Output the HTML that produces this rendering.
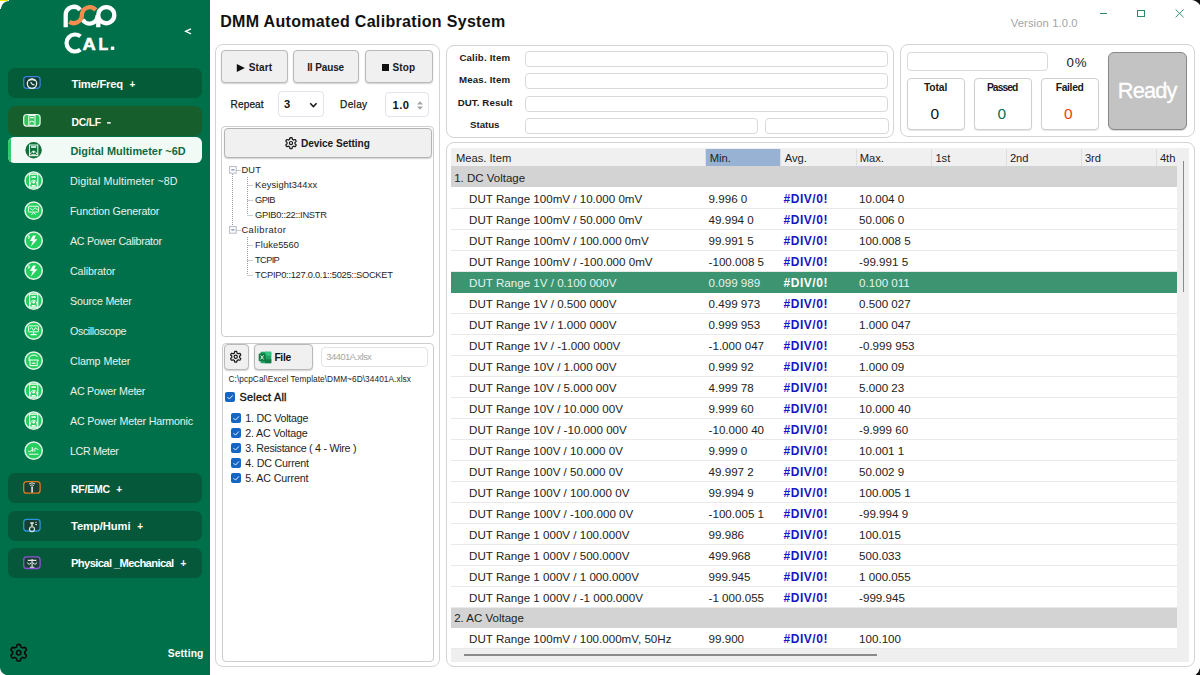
<!DOCTYPE html>
<html><head><meta charset="utf-8">
<style>
*{box-sizing:border-box;margin:0;padding:0}
html,body{width:1200px;height:675px;overflow:hidden;background:#fff;font-family:"Liberation Sans",sans-serif;color:#1e1e1e}
.a{position:absolute}
#side{position:absolute;left:0;top:0;width:210px;height:675px;background:#00704a}
.grp{position:absolute;left:8px;width:194px;height:30px;border-radius:7px;background:#05593a}
.panel{position:absolute;border:1px solid #d4d4d4;border-radius:8px;background:#fff}
.btn{position:absolute;border:1px solid #b9b9b9;border-radius:4px;background:#f0f0f0;box-shadow:0 1px 1.5px rgba(0,0,0,.18)}
.tb{position:absolute;border:1px solid #d9d9d9;border-radius:4px;background:#fff}
.tbx{position:absolute;border:1px solid #cfcfcf;border-radius:4px;background:#fff;box-shadow:0 1px 1px rgba(0,0,0,.10)}
.cb{position:absolute;width:10px;height:9.5px;border-radius:2px;background:#1565c4}
.grow{position:absolute;left:451px;width:726px;height:20.5px;background:#d3d3d3}
.row{position:absolute;left:451px;width:726px;height:21px;background:#fff;border-bottom:1px solid #e9e9e9}
.row.sel{background:#3c9470;border-bottom-color:#3c9470}
.hsep{position:absolute;top:148.5px;width:1px;height:17.5px;background:#dedede}
</style></head><body>
<div id="side">
  <div class="grp" style="top:68px;height:30.2px;background:#035b38"></div>
  <div class="grp" style="top:105.6px;height:30.4px;background:#165e2c"></div>
  <div class="a" style="left:8px;top:137.3px;width:194px;height:25.7px;border-radius:6px;background:#f2faf6;overflow:hidden">
    <div class="a" style="left:0;top:0;width:2.6px;height:26px;background:#34c96a"></div>
  </div>
  <div class="grp" style="top:473.1px;height:30.1px"></div>
  <div class="grp" style="top:510.5px;height:30.2px"></div>
  <div class="grp" style="top:547.6px;height:30.6px"></div>
</div>
<svg class="a" style="left:0;top:0" width="210" height="675" viewBox="0 0 210 675">
  <g fill="none" stroke-width="4.3">
    <path d="M65.7 27.2 L65.7 15.1 A8.2 8.2 0 0 1 80.2 9.8" stroke="#fff"/>
    <path d="M98.3 27.2 L98.3 15.1 A8.0 8.0 0 1 1 98.3 15.2" stroke="#fff"/>
    <path d="M82.6 19.6 A8.0 8.0 0 0 0 97.5 15.1" stroke="#fff"/>
    <path d="M69.3 21.8 A8.1 8.1 0 0 0 81.9 15.1 A7.9 7.9 0 0 1 95.8 10.0" stroke="#f58d4e"/>
  </g>
  <path d="M191 28.8 L185.6 31.3 L191 33.8" fill="none" stroke="#fff" stroke-width="1.3"/>
  <path d="M80.4 36.4 A8.5 8.5 0 1 0 80.4 49.6" fill="none" stroke="#fff" stroke-width="4.2"/>
  <g font-family="Liberation Sans" font-weight="bold" fill="#fff" stroke="#fff" stroke-width="0.6" font-size="16.4">
    <text x="82.6" y="49.7" textLength="13.2" lengthAdjust="spacingAndGlyphs">A</text>
    <text x="98.4" y="49.7" textLength="9.6" lengthAdjust="spacingAndGlyphs">L</text>
    <rect x="110.8" y="46.6" width="3.5" height="3.4" rx="0.8" stroke="none"/>
  </g>
  <!-- group icons -->
  <rect x="23.7" y="76.7" width="16.4" height="11.6" rx="3" fill="#0e3e30" stroke="#3c7fe0" stroke-width="1.3"/>
  <circle cx="32" cy="83.6" r="4.7" fill="none" stroke="#e6ece8" stroke-width="1.3"/>
  <path d="M30.6 82.2 L32.4 84.4 L34.6 85" fill="none" stroke="#e6ece8" stroke-width="1.2"/>
  <path d="M28.6 80.6 Q32 78.4 35.4 80.6" fill="none" stroke="#e6ece8" stroke-width="1.4"/>
  <rect x="23.7" y="114.5" width="16.4" height="11.6" rx="3" fill="#2cc55c" stroke="#eaf7ee" stroke-width="1.2"/>
  <g transform="translate(31.9,120.3) scale(0.72)" fill="none" stroke="#fff"><rect x="-4.3" y="-6.8" width="8.6" height="13.6" stroke-width="1.3"/><rect x="-2.4" y="-4.6" width="4.8" height="1.8" fill="#fff" stroke="none"/><path d="M-3 4 A3 3 0 0 1 3 4" stroke-width="1.3"/></g>
  <rect x="23.7" y="481.6" width="16.4" height="11.6" rx="3" fill="#173f33" stroke="#e0781e" stroke-width="1.3"/>
  <path d="M29 484 Q32 481.5 35 484 M30.2 485.6 Q32 484 33.8 485.6" fill="none" stroke="#dde8e2" stroke-width="1"/>
  <rect x="31.3" y="486.4" width="1.6" height="6.2" fill="#dde8e2"/>
  <rect x="23.7" y="519.4" width="16.4" height="11.6" rx="3" fill="#173f33" stroke="#2a94dc" stroke-width="1.3"/>
  <circle cx="32" cy="529.2" r="2.5" fill="none" stroke="#e2ebe6" stroke-width="1.1"/>
  <path d="M32 526.6 L32 523 M30.2 523 L33.8 523" fill="none" stroke="#e2ebe6" stroke-width="1.4"/>
  <path d="M35.2 524.6 L37 524.6 M35.4 522.4 L36.6 522.4" stroke="#e2ebe6" stroke-width="1"/>
  <rect x="23.7" y="556.9" width="16.4" height="11.6" rx="3" fill="#173f33" stroke="#8d54d6" stroke-width="1.3"/>
  <path d="M27.8 560.4 L36.4 560.4 M32.1 559 L32.1 567 M29.8 567.3 L34.4 567.3" fill="none" stroke="#e6ebe8" stroke-width="1.1"/>
  <path d="M27.6 562.5 A1.7 1.7 0 0 0 31 562.5 M33.2 562.5 A1.7 1.7 0 0 0 36.6 562.5" fill="none" stroke="#e6ebe8" stroke-width="1"/>
  <!-- selected icon -->
  <circle cx="33.6" cy="150.25" r="8.2" fill="#0e6f37"/>
  <g transform="translate(33.6,150.25)" fill="none" stroke="#e8f5ee">
<rect x="-4.1" y="-5.2" width="8.3" height="10.6" stroke-width="1.1"/>
<rect x="-2.6" y="-4.1" width="5.2" height="1.7" fill="#e8f5ee" stroke="none"/>
<path d="M-3.3 4.2 L-2.4 2.2 A2.8 2.8 0 0 1 2.4 2.2 L3.3 4.2" stroke-width="0.9"/>
<circle cx="0" cy="1.9" r="1.1" fill="#e8f5ee" stroke="none"/>
<rect x="-2.2" y="4.0" width="4.4" height="1.3" fill="#e8f5ee" stroke="none"/>
</g>
  <circle cx="33.65" cy="180.65" r="8.6" fill="#25cf5e" stroke="#e8f7ec" stroke-width="1.5"/><g transform="translate(33.65,180.65) scale(0.95)" fill="none" stroke="#fff">
<rect x="-4.3" y="-6.8" width="8.6" height="13.6" rx="0.8" stroke-width="1.2"/>
<rect x="-2.4" y="-4.6" width="4.8" height="1.6" fill="#fff" stroke="none"/>
<path d="M-3.2 4.2 A3.4 3.4 0 1 1 3.2 4.2" stroke-width="0.9"/>
<circle cx="0" cy="1.6" r="1.3" fill="#fff" stroke="none"/>
<rect x="-2" y="4.6" width="4" height="1.4" fill="#fff" stroke="none"/>
</g>
<circle cx="33.65" cy="210.65" r="8.6" fill="#25cf5e" stroke="#e8f7ec" stroke-width="1.5"/><g transform="translate(33.65,210.65)" fill="none" stroke="#fff" stroke-width="0.9">
<rect x="-5.2" y="-4.4" width="10" height="5.8" rx="0.5"/>
<path d="M-4 -2.5 L-1 -0.5 L1.5 -3 L4 -0.5" stroke-width="0.9"/>
<path d="M0 1.6 L-2 4.2 M0 1.6 L2 4.2" />
</g>
<circle cx="33.65" cy="240.65" r="8.6" fill="#25cf5e" stroke="#e8f7ec" stroke-width="1.5"/><g transform="translate(33.65,240.65)">
<path d="M-0.6 -5.2 L-3.8 0.4 L-0.7 0.4 L-2.9 6.0 L3.8 -1.3 L0.6 -1.3 L2.2 -5.2 Z" fill="#fff"/>
<path d="M-5 -5.5 L-5 -1.8 M-5 -5.5 Q-2.6 -3.6 -5 -1.8" fill="none" stroke="#e8f8ee" stroke-width="0.7"/>
</g>
<circle cx="33.65" cy="270.65" r="8.6" fill="#25cf5e" stroke="#e8f7ec" stroke-width="1.5"/><g transform="translate(33.65,270.65)">
<path d="M-0.6 -5.2 L-3.8 0.4 L-0.7 0.4 L-2.9 6.0 L3.8 -1.3 L0.6 -1.3 L2.2 -5.2 Z" fill="#fff"/>
<path d="M-5 -5.5 L-5 -1.8 M-5 -5.5 Q-2.6 -3.6 -5 -1.8" fill="none" stroke="#e8f8ee" stroke-width="0.7"/>
</g>
<circle cx="33.65" cy="300.65" r="8.6" fill="#25cf5e" stroke="#e8f7ec" stroke-width="1.5"/><g transform="translate(33.65,300.65) scale(0.95)" fill="none" stroke="#fff">
<rect x="-4.3" y="-6.8" width="8.6" height="13.6" rx="0.8" stroke-width="1.2"/>
<rect x="-2.4" y="-4.6" width="4.8" height="1.6" fill="#fff" stroke="none"/>
<path d="M-3.2 4.2 A3.4 3.4 0 1 1 3.2 4.2" stroke-width="0.9"/>
<circle cx="0" cy="1.6" r="1.3" fill="#fff" stroke="none"/>
<rect x="-2" y="4.6" width="4" height="1.4" fill="#fff" stroke="none"/>
</g>
<circle cx="33.65" cy="330.65" r="8.6" fill="#25cf5e" stroke="#e8f7ec" stroke-width="1.5"/><g transform="translate(33.65,330.65)" fill="none" stroke="#fff" stroke-width="0.9">
<rect x="-5.2" y="-4.8" width="10" height="6" rx="0.5"/>
<path d="M-4 -1.5 L-2 -3.2 L0 0 L2 -3 L4 -1.2"/>
<path d="M-3 4 L3 4 M0 1.2 L0 4" stroke-width="1.1"/>
</g>
<circle cx="33.65" cy="360.65" r="8.6" fill="#25cf5e" stroke="#e8f7ec" stroke-width="1.5"/><g transform="translate(33.65,360.65)" fill="none" stroke="#fff" stroke-width="1">
<path d="M-4.6 -0.8 A4.8 4 0 0 1 4 -4"/>
<path d="M-4.8 -0.6 L4.8 -0.6 L3.6 1 L3.6 5 L-3.6 5 L-3.6 1 Z" stroke-width="1"/>
<path d="M-1.8 2.6 L1.8 2.6" stroke-width="1.2"/>
</g>
<circle cx="33.65" cy="390.65" r="8.6" fill="#25cf5e" stroke="#e8f7ec" stroke-width="1.5"/><g transform="translate(33.65,390.65) scale(0.95)" fill="none" stroke="#fff">
<rect x="-4.3" y="-6.8" width="8.6" height="13.6" rx="0.8" stroke-width="1.2"/>
<rect x="-2.4" y="-4.6" width="4.8" height="1.6" fill="#fff" stroke="none"/>
<path d="M-3.2 4.2 A3.4 3.4 0 1 1 3.2 4.2" stroke-width="0.9"/>
<circle cx="0" cy="1.6" r="1.3" fill="#fff" stroke="none"/>
<rect x="-2" y="4.6" width="4" height="1.4" fill="#fff" stroke="none"/>
</g>
<circle cx="33.65" cy="420.65" r="8.6" fill="#25cf5e" stroke="#e8f7ec" stroke-width="1.5"/><g transform="translate(33.65,420.65) scale(0.95)" fill="none" stroke="#fff">
<rect x="-4.3" y="-6.8" width="8.6" height="13.6" rx="0.8" stroke-width="1.2"/>
<rect x="-2.4" y="-4.6" width="4.8" height="1.6" fill="#fff" stroke="none"/>
<path d="M-3.2 4.2 A3.4 3.4 0 1 1 3.2 4.2" stroke-width="0.9"/>
<circle cx="0" cy="1.6" r="1.3" fill="#fff" stroke="none"/>
<rect x="-2" y="4.6" width="4" height="1.4" fill="#fff" stroke="none"/>
</g>
<circle cx="33.65" cy="450.65" r="8.6" fill="#25cf5e" stroke="#e8f7ec" stroke-width="1.5"/><g transform="translate(33.65,450.65)" fill="none" stroke="#fff" stroke-width="0.9">
<path d="M-5.6 0.2 Q-4.4 1.8 -3 0.4 Q-2 -0.8 -1.4 0.8 L-1.4 -3.4 L-0.4 0.6 M1.2 0.8 L1.2 -2.4 Q2.6 -3.4 4.6 -0.6"/>
<path d="M-4.8 3.6 L4.8 3.6" stroke-width="1.1" stroke="#dff5e6"/>
</g>
  <!-- setting gear -->
  <path d="M24.80 652.70 L24.79 652.97 L24.78 653.23 L24.75 653.50 L24.80 653.78 L25.14 654.13 L25.65 654.56 L26.15 655.05 L26.41 655.51 L26.37 655.88 L26.22 656.21 L26.06 656.53 L25.89 656.85 L25.70 657.16 L25.50 657.46 L25.28 657.75 L24.99 657.97 L24.46 657.98 L23.79 657.79 L23.15 657.56 L22.68 657.45 L22.41 657.54 L22.20 657.70 L21.98 657.84 L21.75 657.98 L21.52 658.11 L21.28 658.23 L21.03 658.34 L20.82 658.52 L20.68 658.99 L20.56 659.65 L20.39 660.32 L20.12 660.78 L19.78 660.93 L19.42 660.97 L19.06 660.99 L18.70 661.00 L18.34 660.99 L17.98 660.97 L17.62 660.93 L17.28 660.78 L17.01 660.32 L16.84 659.65 L16.72 658.99 L16.58 658.52 L16.37 658.34 L16.12 658.23 L15.88 658.11 L15.65 657.98 L15.42 657.84 L15.20 657.70 L14.99 657.54 L14.72 657.45 L14.25 657.56 L13.61 657.79 L12.94 657.98 L12.41 657.97 L12.12 657.75 L11.90 657.46 L11.70 657.16 L11.51 656.85 L11.34 656.53 L11.18 656.21 L11.03 655.88 L10.99 655.51 L11.25 655.05 L11.75 654.56 L12.26 654.13 L12.60 653.78 L12.65 653.50 L12.62 653.23 L12.61 652.97 L12.60 652.70 L12.61 652.43 L12.62 652.17 L12.65 651.90 L12.60 651.62 L12.26 651.27 L11.75 650.84 L11.25 650.35 L10.99 649.89 L11.03 649.52 L11.18 649.19 L11.34 648.87 L11.51 648.55 L11.70 648.24 L11.90 647.94 L12.12 647.65 L12.41 647.43 L12.94 647.42 L13.61 647.61 L14.25 647.84 L14.72 647.95 L14.99 647.86 L15.20 647.70 L15.42 647.56 L15.65 647.42 L15.88 647.29 L16.12 647.17 L16.37 647.06 L16.58 646.88 L16.72 646.41 L16.84 645.75 L17.01 645.08 L17.28 644.62 L17.62 644.47 L17.98 644.43 L18.34 644.41 L18.70 644.40 L19.06 644.41 L19.42 644.43 L19.78 644.47 L20.12 644.62 L20.39 645.08 L20.56 645.75 L20.68 646.41 L20.82 646.88 L21.03 647.06 L21.28 647.17 L21.52 647.29 L21.75 647.42 L21.98 647.56 L22.20 647.70 L22.41 647.86 L22.68 647.95 L23.15 647.84 L23.79 647.61 L24.46 647.42 L24.99 647.43 L25.28 647.65 L25.50 647.94 L25.70 648.24 L25.89 648.55 L26.06 648.87 L26.22 649.19 L26.37 649.52 L26.41 649.89 L26.15 650.35 L25.65 650.84 L25.14 651.27 L24.80 651.62 L24.75 651.90 L24.78 652.17 L24.79 652.43Z" fill="none" stroke="#0a0a0a" stroke-width="1.6"/><circle cx="18.7" cy="652.7" r="2.2" fill="none" stroke="#0a0a0a" stroke-width="1.5"/>
</svg>

<!-- window controls -->
<div class="a" style="left:1099.5px;top:12.8px;width:7.5px;height:1.1px;background:#2e8a65"></div>
<div class="a" style="left:1137.3px;top:9.5px;width:8px;height:7.8px;border:1.1px solid #2e8a65"></div>
<svg class="a" style="left:1175px;top:9px" width="10" height="9" viewBox="0 0 10 9"><path d="M0.6 0.5L8.6 8.3M8.6 0.5L0.6 8.3" stroke="#3a9272" stroke-width="1"/></svg>

<!-- left control panel -->
<div class="panel" style="left:215.3px;top:44.3px;width:224.5px;height:622.4px"></div>
<div class="btn" style="left:221.3px;top:50.4px;width:66.4px;height:33px"></div>
<div class="btn" style="left:292.7px;top:50.4px;width:66.6px;height:33px"></div>
<div class="btn" style="left:364.7px;top:50.4px;width:68px;height:33px"></div>
<svg class="a" style="left:236px;top:63px" width="10" height="10" viewBox="0 0 10 10"><path d="M0.8 1 L8.9 5 L0.8 9 Z" fill="#111"/></svg>
<div class="a" style="left:381.6px;top:64.1px;width:7.4px;height:7.3px;background:#111"></div>
<div class="tb" style="left:278px;top:91.3px;width:46.4px;height:26px;border-color:#e0e5ec"></div>
<svg class="a" style="left:309px;top:102px" width="9" height="7" viewBox="0 0 9 7"><path d="M1.2 1.2L4.4 4.6L7.6 1.2" fill="none" stroke="#1a1a1a" stroke-width="1.5"/></svg>
<div class="tb" style="left:385.3px;top:92.3px;width:44px;height:24.4px;border-color:#e0e5ec"></div>
<svg class="a" style="left:416px;top:99.5px" width="8" height="11" viewBox="0 0 8 11"><path d="M1 4.5L4 1.2L7 4.5Z M1 6.5L4 9.8L7 6.5Z" fill="#a4a4a4"/></svg>

<div class="tb" style="left:221.4px;top:126.3px;width:212.8px;height:210.5px;border-color:#cdcdcd"></div>
<div class="btn" style="left:223.7px;top:128.3px;width:208px;height:29.4px;border-color:#b4b4b4"></div>
<svg class="a" style="left:0;top:0" width="450" height="400" viewBox="0 0 450 400"><path d="M295.00 143.10 L295.00 143.27 L294.98 143.45 L294.97 143.62 L294.98 143.80 L295.21 144.03 L295.59 144.33 L295.95 144.66 L296.13 144.97 L296.08 145.20 L295.98 145.42 L295.88 145.64 L295.76 145.85 L295.64 146.06 L295.51 146.25 L295.36 146.45 L295.18 146.61 L294.83 146.61 L294.36 146.46 L293.91 146.28 L293.60 146.20 L293.44 146.27 L293.29 146.38 L293.15 146.47 L293.00 146.56 L292.85 146.65 L292.69 146.73 L292.53 146.80 L292.38 146.90 L292.30 147.21 L292.23 147.69 L292.12 148.17 L291.95 148.48 L291.72 148.55 L291.48 148.58 L291.24 148.59 L291.00 148.60 L290.76 148.59 L290.52 148.58 L290.28 148.55 L290.05 148.48 L289.88 148.17 L289.77 147.69 L289.70 147.21 L289.62 146.90 L289.47 146.80 L289.31 146.73 L289.15 146.65 L289.00 146.56 L288.85 146.47 L288.71 146.38 L288.56 146.27 L288.40 146.20 L288.09 146.28 L287.64 146.46 L287.17 146.61 L286.82 146.61 L286.64 146.45 L286.49 146.25 L286.36 146.06 L286.24 145.85 L286.12 145.64 L286.02 145.42 L285.92 145.20 L285.87 144.97 L286.05 144.66 L286.41 144.33 L286.79 144.03 L287.02 143.80 L287.03 143.62 L287.02 143.45 L287.00 143.27 L287.00 143.10 L287.00 142.93 L287.02 142.75 L287.03 142.58 L287.02 142.40 L286.79 142.17 L286.41 141.87 L286.05 141.54 L285.87 141.23 L285.92 141.00 L286.02 140.78 L286.12 140.56 L286.24 140.35 L286.36 140.14 L286.49 139.95 L286.64 139.75 L286.82 139.59 L287.17 139.59 L287.64 139.74 L288.09 139.92 L288.40 140.00 L288.56 139.93 L288.71 139.82 L288.85 139.73 L289.00 139.64 L289.15 139.55 L289.31 139.47 L289.47 139.40 L289.62 139.30 L289.70 138.99 L289.77 138.51 L289.88 138.03 L290.05 137.72 L290.28 137.65 L290.52 137.62 L290.76 137.61 L291.00 137.60 L291.24 137.61 L291.48 137.62 L291.72 137.65 L291.95 137.72 L292.12 138.03 L292.23 138.51 L292.30 138.99 L292.38 139.30 L292.53 139.40 L292.69 139.47 L292.85 139.55 L293.00 139.64 L293.15 139.73 L293.29 139.82 L293.44 139.93 L293.60 140.00 L293.91 139.92 L294.36 139.74 L294.83 139.59 L295.18 139.59 L295.36 139.75 L295.51 139.95 L295.64 140.14 L295.76 140.35 L295.88 140.56 L295.98 140.78 L296.08 141.00 L296.13 141.23 L295.95 141.54 L295.59 141.87 L295.21 142.17 L294.98 142.40 L294.97 142.58 L294.98 142.75 L295.00 142.93Z" fill="none" stroke="#1a1a1a" stroke-width="1.25"/><circle cx="291" cy="143.1" r="1.6" fill="none" stroke="#1a1a1a" stroke-width="1.2"/></svg>
<svg class="a" style="left:225px;top:162px" width="40" height="120" viewBox="225 162 40 120">
  <rect x="229.6" y="166.6" width="6.6" height="6.6" fill="#fff" stroke="#b4b8c4" stroke-width="1"/>
  <path d="M231.3 169.9 L234.5 169.9" stroke="#5566a8" stroke-width="1"/>
  <rect x="229.6" y="226.6" width="6.6" height="6.6" fill="#fff" stroke="#b4b8c4" stroke-width="1"/>
  <path d="M231.3 229.9 L234.5 229.9" stroke="#5566a8" stroke-width="1"/>
  <g stroke="#9a9a9a" stroke-width="1" stroke-dasharray="1 1" fill="none">
    <path d="M232.5 174 L232.5 226"/>
    <path d="M236.5 170.5 L241 170.5 M236.5 230.5 L241 230.5"/>
    <path d="M247.5 177 L247.5 215 M247.5 185.5 L253.5 185.5 M247.5 200.5 L253.5 200.5 M247.5 215.5 L253.5 215.5"/>
    <path d="M247.5 237 L247.5 275 M247.5 245.5 L253.5 245.5 M247.5 260.5 L253.5 260.5 M247.5 275.5 L253.5 275.5"/>
  </g>
</svg>

<div class="tb" style="left:221.7px;top:342.5px;width:212.5px;height:319px;border-color:#cdcdcd"></div>
<div class="btn" style="left:224.2px;top:344.3px;width:24.6px;height:25.3px"></div>

<div class="btn" style="left:253.7px;top:344.3px;width:59.6px;height:25.3px"></div>
<svg class="a" style="left:258px;top:351px" width="14" height="13" viewBox="0 0 14 13">
  <rect x="2.5" y="0.7" width="10.8" height="11.5" rx="1" fill="#21a366"/>
  <rect x="7" y="0.7" width="6.3" height="4" fill="#33c481"/>
  <rect x="7" y="8.3" width="6.3" height="3.9" fill="#107c41"/>
  <rect x="0.7" y="2.6" width="7" height="7.6" rx="0.8" fill="#107c41"/>
  <path d="M2.6 4.4 L5.6 8.4 M5.6 4.4 L2.6 8.4" stroke="#fff" stroke-width="0.9"/>
</svg>
<div class="tb" style="left:320.5px;top:346.5px;width:107.1px;height:20.8px;border-color:#e3e3e3"></div>
<svg class="a" style="left:0;top:0" width="450" height="400" viewBox="0 0 450 400"><path d="M239.60 356.80 L239.60 356.97 L239.59 357.14 L239.57 357.31 L239.58 357.48 L239.81 357.71 L240.19 358.00 L240.55 358.33 L240.73 358.63 L240.69 358.87 L240.59 359.08 L240.49 359.29 L240.38 359.50 L240.25 359.70 L240.12 359.90 L239.98 360.09 L239.80 360.24 L239.45 360.24 L238.99 360.09 L238.54 359.90 L238.23 359.82 L238.07 359.89 L237.94 359.99 L237.80 360.09 L237.65 360.18 L237.50 360.26 L237.35 360.33 L237.19 360.40 L237.05 360.50 L236.97 360.82 L236.90 361.29 L236.80 361.77 L236.63 362.08 L236.40 362.15 L236.17 362.18 L235.94 362.19 L235.70 362.20 L235.46 362.19 L235.23 362.18 L235.00 362.15 L234.77 362.08 L234.60 361.77 L234.50 361.29 L234.43 360.82 L234.35 360.50 L234.21 360.40 L234.05 360.33 L233.90 360.26 L233.75 360.18 L233.60 360.09 L233.46 359.99 L233.33 359.89 L233.17 359.82 L232.86 359.90 L232.41 360.09 L231.95 360.24 L231.60 360.24 L231.42 360.09 L231.28 359.90 L231.15 359.70 L231.02 359.50 L230.91 359.29 L230.81 359.08 L230.71 358.87 L230.67 358.63 L230.85 358.33 L231.21 358.00 L231.59 357.71 L231.82 357.48 L231.83 357.31 L231.81 357.14 L231.80 356.97 L231.80 356.80 L231.80 356.63 L231.81 356.46 L231.83 356.29 L231.82 356.12 L231.59 355.89 L231.21 355.60 L230.85 355.27 L230.67 354.97 L230.71 354.73 L230.81 354.52 L230.91 354.31 L231.02 354.10 L231.15 353.90 L231.28 353.70 L231.42 353.51 L231.60 353.36 L231.95 353.36 L232.41 353.51 L232.86 353.70 L233.17 353.78 L233.33 353.71 L233.46 353.61 L233.60 353.51 L233.75 353.42 L233.90 353.34 L234.05 353.27 L234.21 353.20 L234.35 353.10 L234.43 352.78 L234.50 352.31 L234.60 351.83 L234.77 351.52 L235.00 351.45 L235.23 351.42 L235.46 351.41 L235.70 351.40 L235.94 351.41 L236.17 351.42 L236.40 351.45 L236.63 351.52 L236.80 351.83 L236.90 352.31 L236.97 352.78 L237.05 353.10 L237.19 353.20 L237.35 353.27 L237.50 353.34 L237.65 353.42 L237.80 353.51 L237.94 353.61 L238.07 353.71 L238.23 353.78 L238.54 353.70 L238.99 353.51 L239.45 353.36 L239.80 353.36 L239.98 353.51 L240.12 353.70 L240.25 353.90 L240.38 354.10 L240.49 354.31 L240.59 354.52 L240.69 354.73 L240.73 354.97 L240.55 355.27 L240.19 355.60 L239.81 355.89 L239.58 356.12 L239.57 356.29 L239.59 356.46 L239.60 356.63Z" fill="none" stroke="#1a1a1a" stroke-width="1.25"/><circle cx="235.7" cy="356.8" r="1.6" fill="none" stroke="#1a1a1a" stroke-width="1.2"/></svg>
<div class="cb" style="left:225px;top:392.3px"></div>
<div class="cb" style="left:231.1px;top:413.4px"></div><div class="cb" style="left:231.1px;top:428.4px"></div><div class="cb" style="left:231.1px;top:443.4px"></div><div class="cb" style="left:231.1px;top:458.4px"></div><div class="cb" style="left:231.1px;top:473.4px"></div>
<svg class="a" style="left:0;top:0" width="260" height="500" viewBox="0 0 260 500">
  <path d="M227.4 397 L229.4 399 L232.8 395.3" fill="none" stroke="#fff" stroke-width="0.9"/>
  <path d="M233.5 418.1 L235.5 420.1 L238.9 416.4" fill="none" stroke="#fff" stroke-width="0.9"/><path d="M233.5 433.1 L235.5 435.1 L238.9 431.4" fill="none" stroke="#fff" stroke-width="0.9"/><path d="M233.5 448.1 L235.5 450.1 L238.9 446.4" fill="none" stroke="#fff" stroke-width="0.9"/><path d="M233.5 463.1 L235.5 465.1 L238.9 461.4" fill="none" stroke="#fff" stroke-width="0.9"/><path d="M233.5 478.1 L235.5 480.1 L238.9 476.4" fill="none" stroke="#fff" stroke-width="0.9"/>
</svg>

<!-- info panel -->
<div class="panel" style="left:445.6px;top:44.6px;width:448.8px;height:93.1px"></div>
<div class="tb" style="left:525.3px;top:50.5px;width:363.2px;height:16.2px"></div>
<div class="tb" style="left:525.3px;top:73.2px;width:363.2px;height:16.2px"></div>
<div class="tb" style="left:525.3px;top:95.5px;width:363.2px;height:16.2px"></div>
<div class="tb" style="left:525.3px;top:117.8px;width:232.9px;height:16.2px"></div>
<div class="tb" style="left:765px;top:117.8px;width:123.5px;height:16.2px"></div>

<!-- status panel -->
<div class="panel" style="left:899.6px;top:44.4px;width:295px;height:92.7px"></div>
<div class="tb" style="left:906.6px;top:52.3px;width:141.1px;height:18.7px"></div>
<div class="tbx" style="left:906.6px;top:77.5px;width:58.8px;height:52.8px"></div>
<div class="tbx" style="left:973.6px;top:77.5px;width:58.6px;height:52.8px"></div>
<div class="tbx" style="left:1040.7px;top:77.5px;width:58.5px;height:52.8px"></div>
<div class="a" style="left:1107.7px;top:51.8px;width:79.2px;height:78.7px;border-radius:6px;background:#c3c3c3;border:1px solid #888;box-shadow:0 1px 1px rgba(0,0,0,.15)"></div>

<!-- table panel -->
<div class="panel" style="left:445.6px;top:142.3px;width:749px;height:524.9px"></div>
<div class="a" style="left:451px;top:148px;width:738px;height:514px;background:#efefef"></div>
<div class="a" style="left:451px;top:148px;width:726px;height:18px;background:#f0f0f0"></div>
<div class="a" style="left:705.8px;top:148.7px;width:74.2px;height:17.1px;background:#97b2d2"></div>
<div class="hsep" style="left:780px"></div>
<div class="hsep" style="left:855.5px"></div>
<div class="hsep" style="left:930.5px"></div>
<div class="hsep" style="left:1005.5px"></div>
<div class="hsep" style="left:1080.5px"></div>
<div class="hsep" style="left:1155.5px"></div>
<div class="hsep" style="left:705px"></div>
<div class="grow" style="top:166px;height:21.5px"></div>
<div class="row" style="top:187px;height:21.5px"></div>
<div class="row" style="top:208.5px"></div>
<div class="row" style="top:229.5px"></div>
<div class="row" style="top:250.5px"></div>
<div class="row sel" style="top:271.5px"></div>
<div class="row" style="top:292.5px"></div>
<div class="row" style="top:313.5px"></div>
<div class="row" style="top:334.5px"></div>
<div class="row" style="top:355.5px"></div>
<div class="row" style="top:376.5px"></div>
<div class="row" style="top:397.5px"></div>
<div class="row" style="top:418.5px"></div>
<div class="row" style="top:439.5px"></div>
<div class="row" style="top:460.5px"></div>
<div class="row" style="top:481.5px"></div>
<div class="row" style="top:502.5px"></div>
<div class="row" style="top:523.5px"></div>
<div class="row" style="top:544.5px"></div>
<div class="row" style="top:565.5px"></div>
<div class="row" style="top:586.5px"></div>
<div class="grow" style="top:607.5px"></div>
<div class="row" style="top:628.0px"></div>
<div class="a" style="left:1182.6px;top:160.7px;width:1.5px;height:131px;background:#8a8a8a"></div>
<div class="a" style="left:463.8px;top:654.3px;width:413.2px;height:1.5px;background:#8a8a8a"></div>

<svg class="a" style="left:0;top:0;pointer-events:none" width="1200" height="675" viewBox="0 0 1200 675" font-family="Liberation Sans"><text x="71.60" y="88.30" font-size="11.2" font-weight="bold" fill="#fff" textLength="51.40" lengthAdjust="spacing">Time/Freq</text>
<text x="129.60" y="88.30" font-size="10" font-weight="bold" fill="#fff">+</text>
<text x="71.40" y="125.60" font-size="10.4" font-weight="bold" fill="#fff" textLength="29.80" lengthAdjust="spacing">DC/LF</text>
<rect x="107.1" y="122.1" width="3.6" height="1.5" fill="#fff"/>
<text x="70.40" y="154.80" font-size="10.9" font-weight="bold" fill="#0b6a43" textLength="115.20" lengthAdjust="spacing">Digital Multimeter ~6D</text>
<text x="70.00" y="185.00" font-size="10.7" fill="#e9f2ec" textLength="107.50" lengthAdjust="spacing">Digital Multimeter ~8D</text>
<text x="70.00" y="215.00" font-size="10.7" fill="#e9f2ec" textLength="89.40" lengthAdjust="spacing">Function Generator</text>
<text x="70.00" y="245.00" font-size="10.7" fill="#e9f2ec" textLength="92.00" lengthAdjust="spacing">AC Power Calibrator</text>
<text x="70.00" y="275.00" font-size="10.7" fill="#e9f2ec" textLength="45.30" lengthAdjust="spacing">Calibrator</text>
<text x="70.00" y="305.00" font-size="10.7" fill="#e9f2ec" textLength="61.90" lengthAdjust="spacing">Source Meter</text>
<text x="70.00" y="335.00" font-size="10.7" fill="#e9f2ec" textLength="56.40" lengthAdjust="spacing">Oscilloscope</text>
<text x="70.00" y="365.00" font-size="10.7" fill="#e9f2ec" textLength="60.40" lengthAdjust="spacing">Clamp Meter</text>
<text x="70.00" y="395.00" font-size="10.7" fill="#e9f2ec" textLength="75.40" lengthAdjust="spacing">AC Power Meter</text>
<text x="70.00" y="425.00" font-size="10.7" fill="#e9f2ec" textLength="123.10" lengthAdjust="spacing">AC Power Meter Harmonic</text>
<text x="70.00" y="455.00" font-size="10.7" fill="#e9f2ec" textLength="48.80" lengthAdjust="spacing">LCR Meter</text>
<text x="71.00" y="492.70" font-size="10.5" font-weight="bold" fill="#fff" textLength="39.10" lengthAdjust="spacing">RF/EMC</text>
<text x="116.20" y="492.70" font-size="10" font-weight="bold" fill="#fff">+</text>
<text x="71.00" y="530.10" font-size="11.2" font-weight="bold" fill="#fff" textLength="59.60" lengthAdjust="spacing">Temp/Humi</text>
<text x="137.20" y="530.10" font-size="10" font-weight="bold" fill="#fff">+</text>
<text x="71.00" y="567.40" font-size="11.2" font-weight="bold" fill="#fff" textLength="103.20" lengthAdjust="spacing">Physical _Mechanical</text>
<text x="180.40" y="567.40" font-size="10" font-weight="bold" fill="#fff">+</text>
<text x="167.70" y="656.80" font-size="10.3" font-weight="bold" fill="#fff" textLength="35.70" lengthAdjust="spacing">Setting</text>
<text x="220.20" y="26.90" font-size="16" font-weight="bold" fill="#111" textLength="285.00" lengthAdjust="spacing">DMM Automated Calibration System</text>
<text x="1010.70" y="27.00" font-size="11.2" fill="#a4a4a4" textLength="66.90" lengthAdjust="spacing">Version 1.0.0</text>
<text x="248.70" y="71.40" font-size="10" font-weight="bold" fill="#1a1a1a" textLength="23.30" lengthAdjust="spacing">Start</text>
<text x="307.15" y="71.30" font-size="10" font-weight="bold" fill="#1a1a1a" textLength="37.00" lengthAdjust="spacing">II Pause</text>
<text x="392.40" y="71.40" font-size="10" font-weight="bold" fill="#1a1a1a" textLength="22.70" lengthAdjust="spacing">Stop</text>
<text x="230.60" y="108.00" font-size="10.1" fill="#1a1a1a" textLength="33.00" lengthAdjust="spacing" stroke="#1a1a1a" stroke-width="0.25">Repeat</text>
<text x="284.10" y="108.00" font-size="11.2" font-weight="bold" fill="#111">3</text>
<text x="340.10" y="108.00" font-size="10.1" fill="#1a1a1a" textLength="27.00" lengthAdjust="spacing" stroke="#1a1a1a" stroke-width="0.25">Delay</text>
<text x="392.40" y="108.60" font-size="11.2" font-weight="bold" fill="#111" textLength="16.70" lengthAdjust="spacing">1.0</text>
<text x="300.90" y="147.00" font-size="10.1" font-weight="bold" fill="#1a1a1a" textLength="69.00" lengthAdjust="spacing">Device Setting</text>
<text x="241.40" y="173.30" font-size="9.3" fill="#1e1e1e" textLength="19.60" lengthAdjust="spacing">DUT</text>
<text x="255.10" y="188.30" font-size="9.3" fill="#1e1e1e" textLength="62.00" lengthAdjust="spacing">Keysight344xx</text>
<text x="255.10" y="203.30" font-size="9.3" fill="#1e1e1e" textLength="20.30" lengthAdjust="spacing">GPIB</text>
<text x="255.10" y="218.30" font-size="9.3" fill="#1e1e1e" textLength="71.80" lengthAdjust="spacing">GPIB0::22::INSTR</text>
<text x="241.40" y="233.30" font-size="9.3" fill="#1e1e1e" textLength="44.50" lengthAdjust="spacing">Calibrator</text>
<text x="255.10" y="248.30" font-size="9.3" fill="#1e1e1e" textLength="43.90" lengthAdjust="spacing">Fluke5560</text>
<text x="255.10" y="263.30" font-size="9.3" fill="#1e1e1e" textLength="24.70" lengthAdjust="spacing">TCPIP</text>
<text x="255.10" y="278.30" font-size="9.3" fill="#1e1e1e" textLength="137.80" lengthAdjust="spacing">TCPIP0::127.0.0.1::5025::SOCKET</text>
<text x="274.40" y="361.30" font-size="10.3" font-weight="bold" fill="#111" textLength="16.80" lengthAdjust="spacing">File</text>
<text x="326.30" y="360.40" font-size="9.6" fill="#a8a8a8" textLength="45.50" lengthAdjust="spacing">34401A.xlsx</text>
<text x="228.50" y="382.40" font-size="8.3" fill="#1e1e1e" textLength="182.40" lengthAdjust="spacing">C:\pcpCal\Excel Template\DMM~6D\34401A.xlsx</text>
<text x="239.60" y="400.90" font-size="10.8" fill="#111" textLength="46.90" lengthAdjust="spacing" stroke="#111" stroke-width="0.35">Select All</text>
<text x="245.30" y="421.90" font-size="10.7" fill="#1e1e1e" textLength="63.10" lengthAdjust="spacing">1. DC Voltage</text>
<text x="245.30" y="436.90" font-size="10.7" fill="#1e1e1e" textLength="62.30" lengthAdjust="spacing">2. AC Voltage</text>
<text x="245.30" y="451.90" font-size="10.7" fill="#1e1e1e" textLength="111.20" lengthAdjust="spacing">3. Resistance ( 4 - Wire )</text>
<text x="245.30" y="466.90" font-size="10.7" fill="#1e1e1e" textLength="63.80" lengthAdjust="spacing">4. DC Current</text>
<text x="245.30" y="481.90" font-size="10.7" fill="#1e1e1e" textLength="63.30" lengthAdjust="spacing">5. AC Current</text>
<text x="459.40" y="61.00" font-size="9.7" font-weight="bold" fill="#1a1a1a" textLength="50.70" lengthAdjust="spacing">Calib. Item</text>
<text x="459.00" y="83.30" font-size="9.7" font-weight="bold" fill="#1a1a1a" textLength="51.10" lengthAdjust="spacing">Meas. Item</text>
<text x="457.70" y="105.70" font-size="9.7" font-weight="bold" fill="#1a1a1a" textLength="54.70" lengthAdjust="spacing">DUT. Result</text>
<text x="470.10" y="127.90" font-size="9.7" font-weight="bold" fill="#1a1a1a" textLength="29.30" lengthAdjust="spacing">Status</text>
<text x="1066.60" y="66.90" font-size="13.3" fill="#222" textLength="20.00" lengthAdjust="spacing">0%</text>
<text x="923.90" y="91.00" font-size="10.3" font-weight="bold" fill="#1a1a1a" textLength="23.40" lengthAdjust="spacing">Total</text>
<text x="986.90" y="91.00" font-size="10.3" font-weight="bold" fill="#1a1a1a" textLength="31.40" lengthAdjust="spacing">Passed</text>
<text x="1055.80" y="91.00" font-size="10.3" font-weight="bold" fill="#1a1a1a" textLength="28.00" lengthAdjust="spacing">Failed</text>
<text x="930.40" y="118.90" font-size="15.5" fill="#111">0</text>
<text x="997.40" y="118.90" font-size="15.5" fill="#0b6e52">0</text>
<text x="1064.00" y="118.90" font-size="15.5" fill="#f23c0c">0</text>
<text x="1117.70" y="98.20" font-size="21.8" fill="#fff" textLength="59.80" lengthAdjust="spacing" stroke="#fff" stroke-width="0.3">Ready</text>
<text x="455.90" y="162.10" font-size="11.2" fill="#222">Meas. Item</text>
<text x="709.70" y="162.10" font-size="11.2" fill="#222">Min.</text>
<text x="784.70" y="162.10" font-size="11.2" fill="#222">Avg.</text>
<text x="859.70" y="162.10" font-size="11.2" fill="#222">Max.</text>
<text x="935.40" y="162.10" font-size="11.2" fill="#222">1st</text>
<text x="1009.90" y="162.10" font-size="11.2" fill="#222">2nd</text>
<text x="1084.90" y="162.10" font-size="11.2" fill="#222">3rd</text>
<text x="1159.90" y="162.10" font-size="11.2" fill="#222">4th</text>
<text x="454.20" y="181.60" font-size="11.5" fill="#222">1. DC Voltage</text>
<text x="469.10" y="202.50" font-size="11.6" fill="#222">DUT Range 100mV / 10.000 0mV</text>
<text x="708.60" y="202.50" font-size="11.6" fill="#222">9.996 0</text>
<text x="783.60" y="202.50" font-size="12" font-weight="bold" fill="#1616c4" textLength="43.80" lengthAdjust="spacing">#DIV/0!</text>
<text x="859.10" y="202.50" font-size="11.6" fill="#222">10.004 0</text>
<text x="469.10" y="223.50" font-size="11.6" fill="#222">DUT Range 100mV / 50.000 0mV</text>
<text x="708.60" y="223.50" font-size="11.6" fill="#222">49.994 0</text>
<text x="783.60" y="223.50" font-size="12" font-weight="bold" fill="#1616c4" textLength="43.80" lengthAdjust="spacing">#DIV/0!</text>
<text x="859.10" y="223.50" font-size="11.6" fill="#222">50.006 0</text>
<text x="469.10" y="244.50" font-size="11.6" fill="#222">DUT Range 100mV / 100.000 0mV</text>
<text x="708.60" y="244.50" font-size="11.6" fill="#222">99.991 5</text>
<text x="783.60" y="244.50" font-size="12" font-weight="bold" fill="#1616c4" textLength="43.80" lengthAdjust="spacing">#DIV/0!</text>
<text x="859.10" y="244.50" font-size="11.6" fill="#222">100.008 5</text>
<text x="469.10" y="265.50" font-size="11.6" fill="#222">DUT Range 100mV / -100.000 0mV</text>
<text x="708.60" y="265.50" font-size="11.6" fill="#222">-100.008 5</text>
<text x="783.60" y="265.50" font-size="12" font-weight="bold" fill="#1616c4" textLength="43.80" lengthAdjust="spacing">#DIV/0!</text>
<text x="859.10" y="265.50" font-size="11.6" fill="#222">-99.991 5</text>
<text x="469.10" y="286.50" font-size="11.6" fill="#e8f3ee">DUT Range 1V / 0.100 000V</text>
<text x="708.60" y="286.50" font-size="11.6" fill="#e8f3ee">0.099 989</text>
<text x="783.60" y="286.50" font-size="12" font-weight="bold" fill="#fff" textLength="43.80" lengthAdjust="spacing">#DIV/0!</text>
<text x="859.10" y="286.50" font-size="11.6" fill="#e8f3ee">0.100 011</text>
<text x="469.10" y="307.50" font-size="11.6" fill="#222">DUT Range 1V / 0.500 000V</text>
<text x="708.60" y="307.50" font-size="11.6" fill="#222">0.499 973</text>
<text x="783.60" y="307.50" font-size="12" font-weight="bold" fill="#1616c4" textLength="43.80" lengthAdjust="spacing">#DIV/0!</text>
<text x="859.10" y="307.50" font-size="11.6" fill="#222">0.500 027</text>
<text x="469.10" y="328.50" font-size="11.6" fill="#222">DUT Range 1V / 1.000 000V</text>
<text x="708.60" y="328.50" font-size="11.6" fill="#222">0.999 953</text>
<text x="783.60" y="328.50" font-size="12" font-weight="bold" fill="#1616c4" textLength="43.80" lengthAdjust="spacing">#DIV/0!</text>
<text x="859.10" y="328.50" font-size="11.6" fill="#222">1.000 047</text>
<text x="469.10" y="349.50" font-size="11.6" fill="#222">DUT Range 1V / -1.000 000V</text>
<text x="708.60" y="349.50" font-size="11.6" fill="#222">-1.000 047</text>
<text x="783.60" y="349.50" font-size="12" font-weight="bold" fill="#1616c4" textLength="43.80" lengthAdjust="spacing">#DIV/0!</text>
<text x="859.10" y="349.50" font-size="11.6" fill="#222">-0.999 953</text>
<text x="469.10" y="370.50" font-size="11.6" fill="#222">DUT Range 10V / 1.000 00V</text>
<text x="708.60" y="370.50" font-size="11.6" fill="#222">0.999 92</text>
<text x="783.60" y="370.50" font-size="12" font-weight="bold" fill="#1616c4" textLength="43.80" lengthAdjust="spacing">#DIV/0!</text>
<text x="859.10" y="370.50" font-size="11.6" fill="#222">1.000 09</text>
<text x="469.10" y="391.50" font-size="11.6" fill="#222">DUT Range 10V / 5.000 00V</text>
<text x="708.60" y="391.50" font-size="11.6" fill="#222">4.999 78</text>
<text x="783.60" y="391.50" font-size="12" font-weight="bold" fill="#1616c4" textLength="43.80" lengthAdjust="spacing">#DIV/0!</text>
<text x="859.10" y="391.50" font-size="11.6" fill="#222">5.000 23</text>
<text x="469.10" y="412.50" font-size="11.6" fill="#222">DUT Range 10V / 10.000 00V</text>
<text x="708.60" y="412.50" font-size="11.6" fill="#222">9.999 60</text>
<text x="783.60" y="412.50" font-size="12" font-weight="bold" fill="#1616c4" textLength="43.80" lengthAdjust="spacing">#DIV/0!</text>
<text x="859.10" y="412.50" font-size="11.6" fill="#222">10.000 40</text>
<text x="469.10" y="433.50" font-size="11.6" fill="#222">DUT Range 10V / -10.000 00V</text>
<text x="708.60" y="433.50" font-size="11.6" fill="#222">-10.000 40</text>
<text x="783.60" y="433.50" font-size="12" font-weight="bold" fill="#1616c4" textLength="43.80" lengthAdjust="spacing">#DIV/0!</text>
<text x="859.10" y="433.50" font-size="11.6" fill="#222">-9.999 60</text>
<text x="469.10" y="454.50" font-size="11.6" fill="#222">DUT Range 100V / 10.000 0V</text>
<text x="708.60" y="454.50" font-size="11.6" fill="#222">9.999 0</text>
<text x="783.60" y="454.50" font-size="12" font-weight="bold" fill="#1616c4" textLength="43.80" lengthAdjust="spacing">#DIV/0!</text>
<text x="859.10" y="454.50" font-size="11.6" fill="#222">10.001 1</text>
<text x="469.10" y="475.50" font-size="11.6" fill="#222">DUT Range 100V / 50.000 0V</text>
<text x="708.60" y="475.50" font-size="11.6" fill="#222">49.997 2</text>
<text x="783.60" y="475.50" font-size="12" font-weight="bold" fill="#1616c4" textLength="43.80" lengthAdjust="spacing">#DIV/0!</text>
<text x="859.10" y="475.50" font-size="11.6" fill="#222">50.002 9</text>
<text x="469.10" y="496.50" font-size="11.6" fill="#222">DUT Range 100V / 100.000 0V</text>
<text x="708.60" y="496.50" font-size="11.6" fill="#222">99.994 9</text>
<text x="783.60" y="496.50" font-size="12" font-weight="bold" fill="#1616c4" textLength="43.80" lengthAdjust="spacing">#DIV/0!</text>
<text x="859.10" y="496.50" font-size="11.6" fill="#222">100.005 1</text>
<text x="469.10" y="517.50" font-size="11.6" fill="#222">DUT Range 100V / -100.000 0V</text>
<text x="708.60" y="517.50" font-size="11.6" fill="#222">-100.005 1</text>
<text x="783.60" y="517.50" font-size="12" font-weight="bold" fill="#1616c4" textLength="43.80" lengthAdjust="spacing">#DIV/0!</text>
<text x="859.10" y="517.50" font-size="11.6" fill="#222">-99.994 9</text>
<text x="469.10" y="538.50" font-size="11.6" fill="#222">DUT Range 1 000V / 100.000V</text>
<text x="708.60" y="538.50" font-size="11.6" fill="#222">99.986</text>
<text x="783.60" y="538.50" font-size="12" font-weight="bold" fill="#1616c4" textLength="43.80" lengthAdjust="spacing">#DIV/0!</text>
<text x="859.10" y="538.50" font-size="11.6" fill="#222">100.015</text>
<text x="469.10" y="559.50" font-size="11.6" fill="#222">DUT Range 1 000V / 500.000V</text>
<text x="708.60" y="559.50" font-size="11.6" fill="#222">499.968</text>
<text x="783.60" y="559.50" font-size="12" font-weight="bold" fill="#1616c4" textLength="43.80" lengthAdjust="spacing">#DIV/0!</text>
<text x="859.10" y="559.50" font-size="11.6" fill="#222">500.033</text>
<text x="469.10" y="580.50" font-size="11.6" fill="#222">DUT Range 1 000V / 1 000.000V</text>
<text x="708.60" y="580.50" font-size="11.6" fill="#222">999.945</text>
<text x="783.60" y="580.50" font-size="12" font-weight="bold" fill="#1616c4" textLength="43.80" lengthAdjust="spacing">#DIV/0!</text>
<text x="859.10" y="580.50" font-size="11.6" fill="#222">1 000.055</text>
<text x="469.10" y="601.50" font-size="11.6" fill="#222">DUT Range 1 000V / -1 000.000V</text>
<text x="708.60" y="601.50" font-size="11.6" fill="#222">-1 000.055</text>
<text x="783.60" y="601.50" font-size="12" font-weight="bold" fill="#1616c4" textLength="43.80" lengthAdjust="spacing">#DIV/0!</text>
<text x="859.10" y="601.50" font-size="11.6" fill="#222">-999.945</text>
<text x="454.20" y="622.10" font-size="11.5" fill="#222">2. AC Voltage</text>
<text x="469.10" y="643.00" font-size="11.6" fill="#222">DUT Range 100mV / 100.000mV, 50Hz</text>
<text x="708.60" y="643.00" font-size="11.6" fill="#222">99.900</text>
<text x="783.60" y="643.00" font-size="12" font-weight="bold" fill="#1616c4" textLength="43.80" lengthAdjust="spacing">#DIV/0!</text>
<text x="859.10" y="643.00" font-size="11.6" fill="#222">100.100</text></svg>

<!-- corners -->
<svg class="a" style="left:0;top:0" width="9" height="9" viewBox="0 0 9 9"><path d="M0 0H9V1A8 8 0 0 0 1 8V9H0Z" fill="#fff"/><path d="M0 0H8V1H0Z" fill="#f2e400"/></svg>
<svg class="a" style="left:1190px;top:0" width="10" height="7" viewBox="0 0 10 7"><path d="M2 0H10V5Q6.5 0.6 2 0Z" fill="#111"/></svg>
<svg class="a" style="left:1193px;top:668px" width="7" height="7" viewBox="0 0 7 7"><path d="M7 0V7H2.5Q6 4.5 7 0Z" fill="#111"/></svg>
<svg class="a" style="left:0;top:666px" width="9" height="9" viewBox="0 0 9 9"><path d="M0 0A9 9 0 0 0 6 9H0Z" fill="#fff"/></svg>
</body></html>
